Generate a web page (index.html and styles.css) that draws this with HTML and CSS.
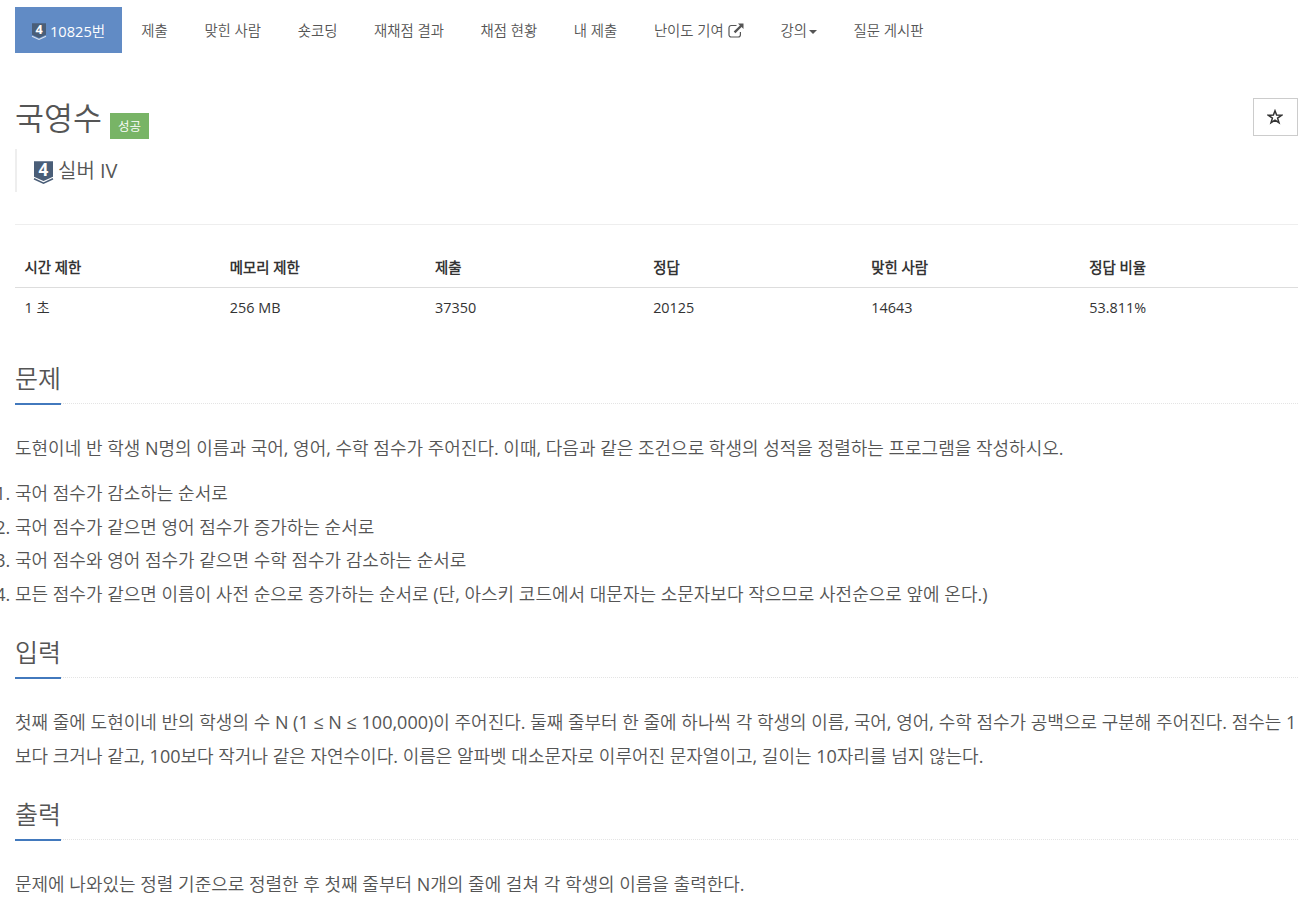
FILE: index.html
```html
<!DOCTYPE html>
<html lang="ko">
<head>
    <meta charset="UTF-8">
    <meta name="viewport" content="width=device-width, initial-scale=1.0">
    <title>10825번: 국영수</title>
    <link rel="stylesheet" href="styles.css">
</head>

<body>
    <!-- 상단 메뉴 -->
    <ul class="problem-menu">
        <li class="active"><a href="#"><svg class="tier" viewBox="0 0 20 25"><path class="shield" d="M0 0h20v16.500l-10 4.500-10-4.500z"/><path class="chevron" d="M0 18.500l10 4.700 10-4.700"/><text x="10" y="15.500">4</text></svg>10825번</a></li>
        <li><a href="#">제출</a></li>
        <li><a href="#">맞힌 사람</a></li>
        <li><a href="#">숏코딩</a></li>
        <li><a href="#">재채점 결과</a></li>
        <li><a href="#">채점 현황</a></li>
        <li><a href="#">내 제출</a></li>
        <li><a href="#">난이도 기여<svg class="external" viewBox="0 0 16 16"><path class="box" d="M8.500 2.500H3.200A2.200 2.200 0 0 0 1 4.700v7A2.200 2.200 0 0 0 3.200 14h7a2.200 2.200 0 0 0 2.200-2.200V9"/><path class="arrow" d="M10 .5h5.500v5.500l-1.900-1.900-6.200 6.200-1.700-1.700 6.200-6.200z"/></svg></a></li>
        <li><a href="#">강의<span class="caret"></span></a></li>
        <li><a href="#">질문 게시판</a></li>
    </ul>

    <!-- 제목 -->
    <div class="page-header">
        <div class="title-row">
            <h1>국영수</h1>
            <span class="label">성공</span>
            <button class="bookmark"><svg viewBox="0 0 16 16"><path d="M8 1.800l1.600 4.300 4.900.2-3.900 2.800 1.400 4.600L8 11.100l-4 2.600 1.400-4.600-3.900-2.800 4.900-.2z"/></svg></button>
        </div>
        <blockquote><svg class="tier" viewBox="0 0 20 25"><path class="shield" d="M0 0h20v16.500l-10 4.500-10-4.500z"/><path class="chevron" d="M0 18.500l10 4.700 10-4.700"/><text x="10" y="15.500">4</text></svg>실버 IV</blockquote>
    </div>

    <table class="info">
        <tr>
            <th class="limit">시간 제한</th>
            <th class="limit">메모리 제한</th>
            <th>제출</th>
            <th>정답</th>
            <th>맞힌 사람</th>
            <th>정답 비율</th>
        </tr>
        <tr>
            <td>1 초</td>
            <td>256 MB</td>
            <td>37350</td>
            <td>20125</td>
            <td>14643</td>
            <td>53.811%</td>
        </tr>
    </table>

    <section>
        <div class="headline"><h2>문제</h2></div>
        <p>도현이네 반 학생 N명의 이름과 국어, 영어, 수학 점수가 주어진다. 이때, 다음과 같은 조건으로 학생의 성적을 정렬하는 프로그램을 작성하시오.</p>
        <ol>
            <li>국어 점수가 감소하는 순서로</li>
            <li>국어 점수가 같으면 영어 점수가 증가하는 순서로</li>
            <li>국어 점수와 영어 점수가 같으면 수학 점수가 감소하는 순서로</li>
            <li>모든 점수가 같으면 이름이 사전 순으로 증가하는 순서로 (단, 아스키 코드에서 대문자는 소문자보다 작으므로 사전순으로 앞에 온다.)</li>
        </ol>
    </section>

    <section>
        <div class="headline"><h2>입력</h2></div>
        <p>첫째 줄에 도현이네 반의 학생의 수 N (1 ≤ N ≤ 100,000)이 주어진다. 둘째 줄부터 한 줄에 하나씩 각 학생의 이름, 국어, 영어, 수학 점수가 공백으로 구분해 주어진다. 점수는 1보다 크거나 같고, 100보다 작거나 같은 자연수이다. 이름은 알파벳 대소문자로 이루어진 문자열이고, 길이는 10자리를 넘지 않는다.</p>
    </section>

    <section>
        <div class="headline"><h2>출력</h2></div>
        <p>문제에 나와있는 정렬 기준으로 정렬한 후 첫째 줄부터 N개의 줄에 걸쳐 각 학생의 이름을 출력한다.</p>
    </section>
</body>
</html>
```
FILE: styles.css
```css
*{box-sizing: border-box;}
html{overflow: hidden;}
body{margin: 0; padding: 7px 15px 0; background-color: white; color: #333; font-family: "Open Sans", "Noto Sans CJK KR DemiLight", "Noto Sans CJK KR", sans-serif; font-size: 14.4px; line-height: 20px; overflow: hidden; height: 901px;}
a{color: #555; text-decoration: none;}

/* 메뉴 */
.problem-menu{display: flex; gap: 2px; margin: 0; padding: 0; list-style: none;}
.problem-menu a{display: flex; align-items: center; height: 46px; padding: 1px 17.300px 0; white-space: nowrap;}
.problem-menu .active a{width: 107px; color: white; background-color: #618bc5; padding: 1px 0 0 17px; font-size: 14.600px; font-weight: 500;}
.problem-menu .tier{width: 14px; height: 18px; margin: 3px 4px 0 0;}
.problem-menu .chevron{stroke: #dce3ec;}
.external{width: 16px; height: 16px; margin-left: 4px;}
.external .box{fill: none; stroke: #555; stroke-width: 1.2;}
.external .arrow{fill: #555;}
.caret{border-top: 4px solid #555; border-left: 4px solid transparent; border-right: 4px solid transparent; margin: 2px 0 0 2px;}

/* 티어 아이콘 */
.tier{overflow: visible;}
.shield{fill: #4a5e78;}
.chevron{fill: none; stroke: #4a5e78; stroke-width: 1.6;}
.tier text{fill: white; font-family: "Open Sans", sans-serif; font-size: 18px; font-weight: 700; line-height: 1; text-anchor: middle;}

/* 제목 */
.page-header{height: 172px; padding-top: 45px; border-bottom: 1px solid #eee;}
.title-row{display: flex; height: 51px;}
h1{margin: 0; font-size: 31.5px; font-weight: 350; line-height: 39px; color: #555;}
.label{height: 26px; margin: 15px 0 0 8px; padding: 0 8px; background-color: #78b466; color: white; font-size: 12.5px; font-weight: 500; line-height: 27px;}
.bookmark{display: flex; align-items: center; justify-content: center; width: 45px; height: 38px; margin-left: auto; padding: 0 1px 1px 0; border: 1px solid #ccc; background-color: white;}
.bookmark svg{width: 16px; height: 16px; fill: none; stroke: #333; stroke-width: 1.5;}
blockquote{display: flex; align-items: center; height: 43px; margin: 0; padding-left: 17px; border-left: 2px solid #eee; color: #555; font-size: 20px;}
blockquote .tier{width: 19px; height: 24px; margin: 4px 5px 0 0;}

/* 표 */
.info{width: 100%; margin-top: 22px; border-collapse: collapse; table-layout: fixed;}
.info th, .info td{padding: 10px 9.5px; text-align: left; width: 17%;}
.info .limit{width: 16%;}
.info th{padding: 11px 9.5px 9px; border-bottom: 1px solid #ddd; font-weight: 600;}

/* 본문 */
.headline{display: flex; height: 46px; border-bottom: 1px dotted #e4e4e4;}
.headline h2{height: 47px; margin: 0; border-bottom: 2px solid #4279bd; color: #555; font-size: 25px; font-weight: 350; line-height: 41px;}
section{margin-bottom: 20px; color: #555; font-size: 18px; line-height: 33.75px;}
.info + section{margin-top: 30px;}
section p{margin: 28px 0 11px;}
section p:last-child{margin-bottom: 21px;}
section ol{margin: 0; padding: 0;}
```
